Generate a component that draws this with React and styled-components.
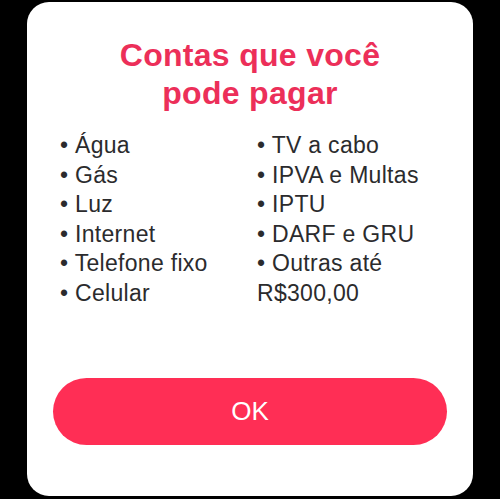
import React from 'react';
import styled, { createGlobalStyle } from 'styled-components';

const GlobalStyle = createGlobalStyle`
  html, body {
    margin: 0;
    padding: 0;
    background: #000;
  }
  body {
    font-family: "Liberation Sans", Arial, sans-serif;
  }
`;

const leftItems = ['Água', 'Gás', 'Luz', 'Internet', 'Telefone fixo', 'Celular'];
const rightItems = ['TV a cabo', 'IPVA e Multas', 'IPTU', 'DARF e GRU', 'Outras até'];

const App = () => {
  return (
    <>
      <GlobalStyle />
      <Page>
        <Card>
          <Title>
            Contas que você
            <br />
            pode pagar
          </Title>
          <List>
            <Column>
              {leftItems.map((item) => (
                <Item key={item}>• {item}</Item>
              ))}
            </Column>
            <Column>
              {rightItems.map((item) => (
                <Item key={item}>• {item}</Item>
              ))}
              <Item>R$300,00</Item>
            </Column>
          </List>
          <Button>OK</Button>
        </Card>
      </Page>
    </>
  );
};

const Page = styled.div`
  width: 500px;
  height: 499px;
  background: #000;
  padding: 2px 27px 0;
  box-sizing: border-box;
`;

const Card = styled.div`
  height: 494px;
  background: #fff;
  border-radius: 22px;
  padding: 34px 26px 51px 33px;
  box-sizing: border-box;
  display: flex;
  flex-direction: column;
`;

const Title = styled.h1`
  margin: 0 0 0 -7px;
  font-size: 32px;
  line-height: 38px;
  letter-spacing: 0.3px;
  font-weight: bold;
  color: #ec2f59;
  text-align: center;
`;

const List = styled.div`
  display: grid;
  grid-template-columns: 197px 190px;
  margin-top: 19px;
`;

const Column = styled.div`
  display: flex;
  flex-direction: column;
`;

const Item = styled.div`
  font-size: 23px;
  line-height: 29.5px;
  letter-spacing: 0.3px;
  color: #2b2b2d;
  white-space: nowrap;
`;

const Button = styled.button`
  margin-top: auto;
  margin-left: -7px;
  width: 394px;
  height: 67px;
  border: none;
  border-radius: 34px;
  background: #ff2e55;
  color: #fff;
  font-family: "Liberation Sans", Arial, sans-serif;
  font-size: 26px;
  cursor: pointer;
`;

export default App;
